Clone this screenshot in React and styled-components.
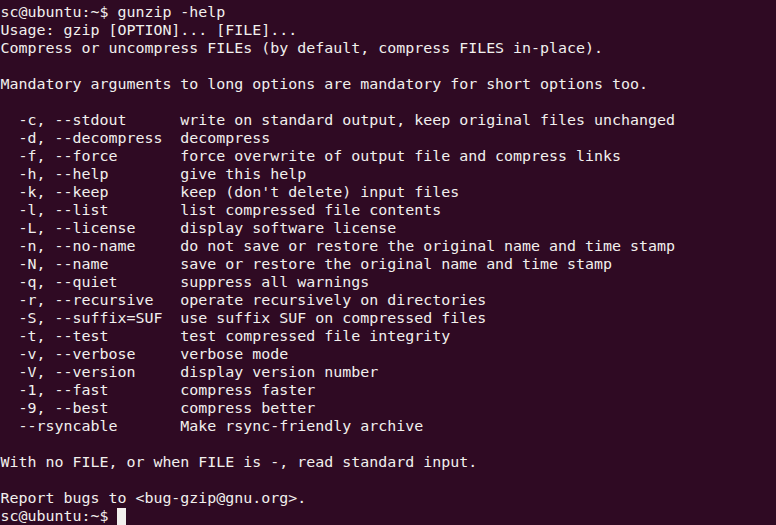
import React from "react";
import styled, { createGlobalStyle } from "styled-components";

const GlobalStyle = createGlobalStyle`
  html, body {
    margin: 0;
    padding: 0;
    background: #300a24;
  }
`;

const Terminal = styled.div`
  width: 776px;
  height: 525px;
  box-sizing: border-box;
  padding: 3px 0 0 0.5px;
  overflow: hidden;
  background: #2f0a23;
  color: #f2f0ee;
  font-family: "DejaVu Sans Mono", "Liberation Mono", monospace;
  font-size: 14.95px;
  line-height: 18px;
`;

const Line = styled.div`
  white-space: pre;
  height: 18px;
`;

const OptionRow = styled.div`
  display: grid;
  grid-template-columns: 20ch 1fr;
  white-space: pre;
  height: 18px;
`;

const Flag = styled.span`
  padding-left: 2ch;
`;

const Cursor = styled.span`
  display: inline-block;
  width: 9px;
  height: 17px;
  vertical-align: -4px;
  background: #f2f0ee;
`;

const options = [
  ["-c, --stdout", "write on standard output, keep original files unchanged"],
  ["-d, --decompress", "decompress"],
  ["-f, --force", "force overwrite of output file and compress links"],
  ["-h, --help", "give this help"],
  ["-k, --keep", "keep (don't delete) input files"],
  ["-l, --list", "list compressed file contents"],
  ["-L, --license", "display software license"],
  ["-n, --no-name", "do not save or restore the original name and time stamp"],
  ["-N, --name", "save or restore the original name and time stamp"],
  ["-q, --quiet", "suppress all warnings"],
  ["-r, --recursive", "operate recursively on directories"],
  ["-S, --suffix=SUF", "use suffix SUF on compressed files"],
  ["-t, --test", "test compressed file integrity"],
  ["-v, --verbose", "verbose mode"],
  ["-V, --version", "display version number"],
  ["-1, --fast", "compress faster"],
  ["-9, --best", "compress better"],
  ["--rsyncable", "Make rsync-friendly archive"],
];

const App = () => {
  return (
    <>
      <GlobalStyle />
      <Terminal>
        <Line>sc@ubuntu:~$ gunzip -help</Line>
        <Line>Usage: gzip [OPTION]... [FILE]...</Line>
        <Line>Compress or uncompress FILEs (by default, compress FILES in-place).</Line>
        <Line />
        <Line>Mandatory arguments to long options are mandatory for short options too.</Line>
        <Line />
        {options.map(([flag, desc]) => (
          <OptionRow key={flag}>
            <Flag>{flag}</Flag>
            <span>{desc}</span>
          </OptionRow>
        ))}
        <Line />
        <Line>With no FILE, or when FILE is -, read standard input.</Line>
        <Line />
        <Line>Report bugs to &lt;bug-gzip@gnu.org&gt;.</Line>
        <Line>
          sc@ubuntu:~$ <Cursor />
        </Line>
      </Terminal>
    </>
  );
};

export default App;
